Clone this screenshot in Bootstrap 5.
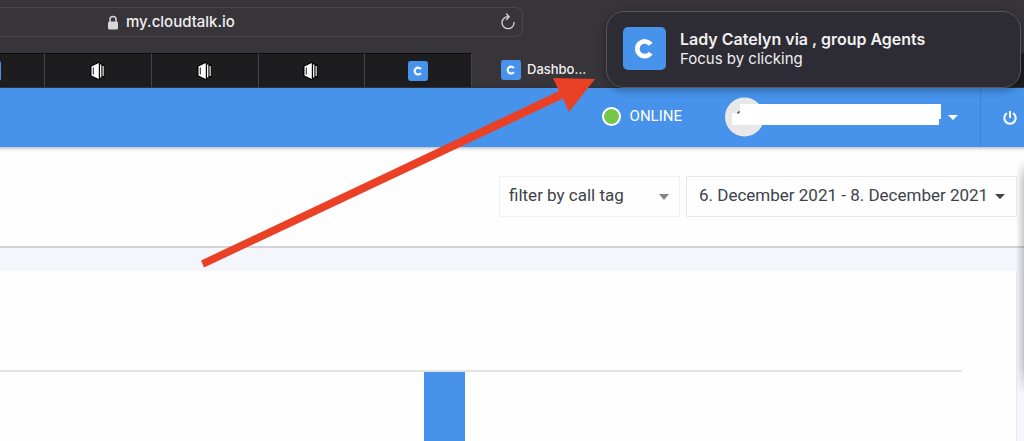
<!DOCTYPE html>
<html lang="en">
<head>
<meta charset="utf-8">
<meta name="viewport" content="width=device-width, initial-scale=1">
<title>Dashboard</title>
<link href="https://cdn.jsdelivr.net/npm/bootstrap@5.3.0/dist/css/bootstrap.min.css" rel="stylesheet">
<style>
  body { font-family: Roboto, sans-serif; background: #f4f6fb; color: #40424a; }
  .chrome, .notice { font-family: Inter, sans-serif; color: #f0f0f1; }
  .chrome { background: #37353a; }
  .toolbar { height: 53px; padding-top: 7px; }
  .address { width: 51.1%; height: 30px; border: 1px solid #49474c; border-left: 0; border-radius: 0 8px 8px 0; font-size: 15px; padding: 0 6px 0 107px; gap: 7px; }
  .address input { font-size: 15px; font-weight: 500; color: #f0f0f1; background: none; outline: 0; width: 200px; }
  .tabs { height: 35px; margin-left: -6%; background: #1d1d1f; border-bottom: 1px solid #303036; }
  .tab { flex: 0 0 9.83%; border-right: 1px solid #454449; border-top: 1px solid #0c0c0e; color: inherit; }
  .tab-active { flex: 0 0 44%; padding-left: 29px; gap: 6px; background: #37353a; font-size: 13px; font-weight: 500; color: #f0f0f1; }
  .topbar { height: 60px; background: #4793ec; color: #fff; border-bottom: 1px solid #c2ccd8; }
  .status-dot { width: 19px; height: 19px; border: 2px solid #fff; border-radius: 50%; background: #73c648; }
  .status { font-size: 15px; gap: 9px; margin-right: 43px; margin-top: -3px; }
  .account { margin-top: -1px; }
  .account .caret { margin: 0 22px 0 6px; }
  .power { width: 44px; height: 56px; border-left: 1px solid #3d82d5; padding-left: 15px; }
  .filters { height: 100px; background: #fefefe; border-bottom: 2px solid #d3d4d8; padding: 0 7px 2px 0; gap: 6px; box-shadow: inset 0 4px 3px -3px #ccc; }
  .tagselect { width: 181px; height: 41px; border: 1px solid #f1f1f3; border-radius: 0; font-size: 17px; color: #40424a; background-color: #fefefe; padding: 0 9px; appearance: none; }
  .tagwrap::after { content: ""; position: absolute; right: 11px; top: 18px; border: 5px solid transparent; border-top: 6px solid #858588; border-bottom: 0; pointer-events: none; }
  .dates { height: 41px; width: 331px; border: 1px solid #e9e9ec; border-radius: 0; background: #fefefe; font-size: 17px; color: #40424a; padding: 0 12px; gap: 7px; white-space: nowrap; }
  .caret { border: 5px solid transparent; border-top-color: currentColor; border-bottom: 0; }
  .chartcard { margin: 23px 7px 0 0; background: #fefefe; border-right: 1px solid #e9eaee; padding: 99px 54px 0 0; }
  .chart { border-top: 2px solid #e3e3e3; padding-left: 44.1%; }
  .chartbar { width: 41px; background: #4793ec; }
  .notice { top: 11px; right: 3px; width: 415px; height: 77px; border: 1px solid #57565d; border-radius: 18px; background: #2d2b33; box-shadow: 0 2px 9px #0005; padding: 0 16px 2px; gap: 14px; font-size: 15px; line-height: 19px; z-index: 3; }
  .notice-title { font-size: 16px; }
  .edge { top: 160px; right: 0; width: 8px; height: 235px; background: linear-gradient(90deg, #0000, #0003); mask-image: linear-gradient(transparent, #000 20px, #000 205px, transparent); -webkit-mask-image: linear-gradient(transparent, #000 20px, #000 205px, transparent); }
  .pointer { top: 0; left: 0; z-index: 2; pointer-events: none; }
</style>
</head>
<body class="d-flex flex-column min-vh-100 position-relative overflow-hidden">

<svg class="d-none">
  <symbol id="brand" viewBox="0 0 42 42"><rect width="42" height="42" rx="5" fill="#4793ec"/><path d="M27 17A7.200 7.200 0 1 0 27 25.500" fill="none" stroke="#fff" stroke-width="4.500"/></symbol>
  <symbol id="door" viewBox="0 0 16 18"><path d="M0 4 8 0l7 3v12l-7 3-8-4z" fill="#050506"/><path d="M1.500 4.500 8.800 1v16L1.500 13.500z" fill="#fff"/><path d="M3.300 5.500v7" stroke="#222" stroke-width="1"/><path d="M10.700 2.500v13" stroke="#fff" stroke-width="1.300"/><path d="M13.200 4v10" stroke="#b9aaa8" stroke-width="1.800"/></symbol>
</svg>

<header class="chrome">
  <div class="toolbar">
    <div class="address d-flex align-items-center">
      <svg width="12" height="15" viewBox="0 0 12 15"><path d="M3 7V4.500a3 3 0 0 1 6 0V7" fill="none" stroke="#d8d8da" stroke-width="1.500"/><rect x="1" y="6.500" width="10" height="8" rx="1.500" fill="#d8d8da"/></svg>
      <input class="border-0 p-0" type="text" value="my.cloudtalk.io" aria-label="Address">
      <button class="btn p-0 border-0 d-flex ms-auto" type="button" aria-label="Reload">
        <svg width="16" height="18" viewBox="0 0 16 18" fill="none" stroke="#d8d4d4" stroke-width="1.300" stroke-linecap="round" stroke-linejoin="round"><path d="M9 3.800A6 6 0 1 0 14 9.500M6.500 1 9.200 3.800 6.500 6.500"/></svg>
      </button>
    </div>
  </div>
  <nav class="tabs d-flex" aria-label="Tabs">
    <a href="#" class="tab d-flex align-items-center justify-content-center" aria-label="CloudTalk"><svg width="20" height="20"><use href="#brand"/></svg></a>
    <a href="#" class="tab d-flex align-items-center justify-content-center" aria-label="Door"><svg width="16" height="18"><use href="#door"/></svg></a>
    <a href="#" class="tab d-flex align-items-center justify-content-center" aria-label="Door"><svg width="16" height="18"><use href="#door"/></svg></a>
    <a href="#" class="tab d-flex align-items-center justify-content-center" aria-label="Door"><svg width="16" height="18"><use href="#door"/></svg></a>
    <a href="#" class="tab d-flex align-items-center justify-content-center" aria-label="CloudTalk"><svg width="20" height="20"><use href="#brand"/></svg></a>
    <a href="#" class="tab-active d-flex align-items-center text-decoration-none"><svg width="20" height="20"><use href="#brand"/></svg>Dashbo...</a>
  </nav>
</header>

<div class="topbar d-flex align-items-center justify-content-end">
  <div class="status d-flex align-items-center"><span class="status-dot"></span>ONLINE</div>
  <button class="account btn p-0 border-0 text-white d-flex align-items-center" type="button" aria-label="Account">
    <svg width="217" height="40" viewBox="0 0 217 40"><circle cx="19.500" cy="20" r="19.500" fill="#e8e8e8"/><path d="M15 7H216V22H214V28H7V16H15z" fill="#fff"/><path d="M12 16h2v-2" fill="none" stroke="#333"/></svg>
    <span class="caret"></span>
  </button>
  <button class="power btn py-0 pe-0 border-top-0 border-end-0 border-bottom-0 rounded-0 text-white d-flex align-items-center justify-content-center" type="button" aria-label="Log out">
    <svg width="16" height="16" viewBox="0 0 16 16" fill="none" stroke="#fff" stroke-width="2"><path d="M5 3.200a5.700 5.700 0 1 0 6 0M8 1v7"/></svg>
  </button>
</div>

<form class="filters d-flex align-items-center justify-content-end">
  <div class="tagwrap position-relative">
    <select class="tagselect" aria-label="Call tag"><option>filter by call tag</option></select>
  </div>
  <button class="dates btn d-flex align-items-center justify-content-between" type="button">6. December 2021 - 8. December 2021<span class="caret"></span></button>
</form>

<main class="chartcard flex-grow-1 d-flex flex-column">
  <div class="chart flex-grow-1 d-flex"><div class="chartbar"></div></div>
</main>

<div class="edge position-absolute"></div>

<svg class="pointer position-absolute" width="600" height="270" viewBox="0 0 600 270"><path d="M201 260.500 559 91 553 78 595 79 569 112 563 98.500 204 267.500z" fill="#ea4126"/></svg>

<aside class="notice position-absolute d-flex align-items-center" role="alert">
  <svg width="43" height="43"><use href="#brand"/></svg>
  <div><div class="notice-title fw-semibold">Lady Catelyn via , group Agents</div><div>Focus by clicking</div></div>
</aside>

<script src="https://cdn.jsdelivr.net/npm/bootstrap@5.3.0/dist/js/bootstrap.bundle.min.js"></script>
</body>
</html>
